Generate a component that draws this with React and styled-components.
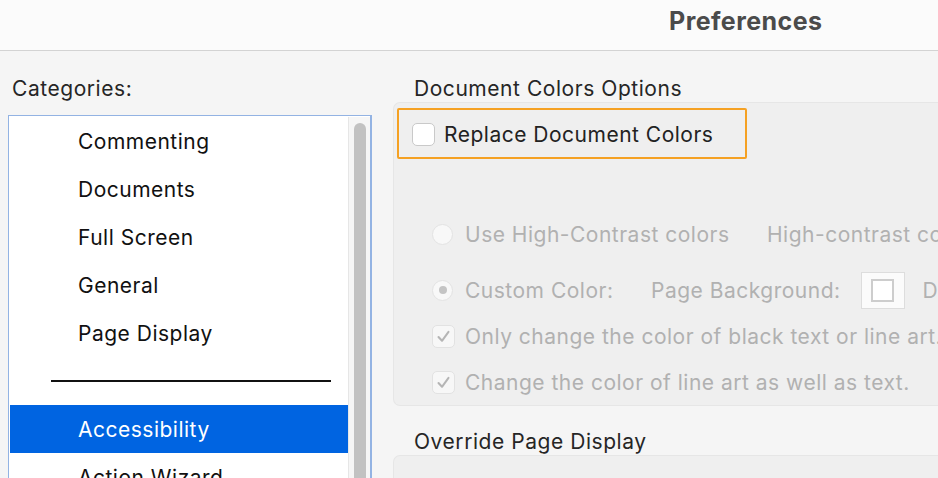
import React from "react";
import styled, { createGlobalStyle } from "styled-components";

const GlobalStyle = createGlobalStyle`
  html, body {
    margin: 0;
    padding: 0;
    background: #f5f5f5;
    font-family: Inter, "Noto Sans", "Liberation Sans", sans-serif;
    -webkit-font-smoothing: antialiased;
  }
`;

const Window = styled.div`
  width: 938px;
  height: 478px;
  overflow: hidden;
  background: #f5f5f5;
`;

const TitleBar = styled.div`
  height: 51px;
  box-sizing: border-box;
  display: flex;
  align-items: center;
  padding: 0 0 8px 669px;
  background: #fbfbfb;
  border-bottom: 1px solid #d3d3d3;
`;

const Title = styled.h1`
  margin: 0;
  font-size: 25px;
  font-weight: 700;
  color: #4b4b4b;
  letter-spacing: 0.45px;
`;

const Body = styled.div`
  display: flex;
  gap: 21px;
  padding-left: 8px;
`;

const Column = styled.div`
  display: flex;
  flex-direction: column;
  padding-top: 26px;
  width: ${(p) => (p.$width ? `${p.$width}px` : "auto")};
  flex: ${(p) => (p.$width ? "none" : "1")};
  min-width: 0;
`;

const Heading = styled.div`
  height: 24px;
  line-height: 24px;
  font-size: 21px;
  letter-spacing: 0.55px;
  color: #262626;
  padding-left: ${(p) => p.$indent || 0}px;
  margin-top: ${(p) => p.$top || 0}px;
  white-space: nowrap;
`;

const ListBox = styled.div`
  margin-top: 14px;
  height: 400px;
  display: flex;
  background: #ffffff;
  border: 1px solid #93b3e3;
  border-right-width: 2px;
  padding: 1px 0 0 1px;
`;

const Items = styled.div`
  flex: 1;
  display: flex;
  flex-direction: column;
`;

const Item = styled.div`
  height: 48px;
  flex: none;
  display: flex;
  align-items: center;
  padding-left: 68px;
  font-size: 21px;
  letter-spacing: 0.5px;
  color: ${(p) => (p.$selected ? "#ffffff" : "#111111")};
  background: ${(p) => (p.$selected ? "#0064e1" : "transparent")};
`;

const SeparatorRow = styled.div`
  height: 48px;
  flex: none;
  display: flex;
  align-items: center;
  padding-left: 41px;
`;

const Rule = styled.div`
  width: 280px;
  height: 2px;
  background: #111111;
`;

const ScrollTrack = styled.div`
  width: 21px;
  flex: none;
  background: #f6f6f6;
  border-left: 1px solid #e6e6e6;
  display: flex;
  justify-content: center;
  padding-top: 6px;
`;

const ScrollThumb = styled.div`
  width: 12px;
  height: 420px;
  border-radius: 6px;
  background: #c2c2c2;
`;

const Group = styled.div`
  margin-top: ${(p) => p.$top ?? 1}px;
  background: #efefef;
  border: 1px solid #e6e6e6;
  border-right: none;
  border-radius: 7px 0 0 7px;
  padding: 5px 0 0 3px;
  height: ${(p) => (p.$height ? `${p.$height}px` : "auto")};
  box-sizing: border-box;
`;

const Highlight = styled.div`
  width: 350px;
  height: 51px;
  box-sizing: border-box;
  border: 2px solid #f5a123;
  border-radius: 2px;
  display: flex;
  align-items: center;
  gap: 9px;
  padding: 2px 0 0 13px;
`;

const Box = styled.span`
  width: 23px;
  height: 23px;
  box-sizing: border-box;
  flex: none;
  border-radius: 5px;
  border: 1px solid ${(p) => (p.$disabled ? "#e2e2e2" : "#c9c9c9")};
  background: ${(p) => (p.$disabled ? "#f7f7f7" : "#ffffff")};
  display: flex;
  align-items: center;
  justify-content: center;
`;

const Label = styled.span`
  font-size: 21px;
  letter-spacing: 0.5px;
  color: ${(p) => (p.$disabled ? "#b1b1b1" : "#222222")};
  white-space: nowrap;
`;

const Options = styled.div`
  display: flex;
  flex-direction: column;
  padding: 52px 0 0 35px;
`;

const Row = styled.div`
  height: 46px;
  display: flex;
  align-items: center;
  margin-top: ${(p) => p.$top || 0}px;
  white-space: nowrap;
`;

const Cell = styled.div`
  display: flex;
  align-items: center;
  gap: ${(p) => p.$gap || 12}px;
  width: ${(p) => (p.$width ? `${p.$width}px` : "auto")};
  flex: none;
`;

const Radio = styled.span`
  width: 21px;
  height: 21px;
  box-sizing: border-box;
  border-radius: 50%;
  border: 1px solid #e3e3e3;
  background: #f8f8f8;
  display: flex;
  align-items: center;
  justify-content: center;
  flex: none;

  &::after {
    content: "";
    width: 8px;
    height: 8px;
    border-radius: 50%;
    background: ${(p) => (p.$checked ? "#c4c4c4" : "transparent")};
  }
`;

const Swatch = styled.span`
  width: 44px;
  height: 37px;
  box-sizing: border-box;
  margin: 0 18px 0 20px;
  background: #fbfbfb;
  border: 1px solid #dddddd;
  display: flex;
  align-items: center;
  justify-content: center;
  flex: none;
`;

const SwatchInner = styled.span`
  width: 23px;
  height: 23px;
  box-sizing: border-box;
  border: 2px solid #cdcdcd;
  background: #ffffff;
`;

function Check() {
  return (
    <svg width="15" height="15" viewBox="0 0 15 15">
      <path
        d="M2.5 8 L6 11.8 L12.5 2.8"
        fill="none"
        stroke="#b5b5b5"
        strokeWidth="2"
        strokeLinecap="round"
        strokeLinejoin="round"
      />
    </svg>
  );
}

const categories = ["Commenting", "Documents", "Full Screen", "General", "Page Display"];

export default function App() {
  return (
    <>
      <GlobalStyle />
      <Window>
        <TitleBar>
          <Title>Preferences</Title>
        </TitleBar>
        <Body>
          <Column $width={364}>
            <Heading $indent={4}>Categories:</Heading>
            <ListBox>
              <Items>
                {categories.map((c) => (
                  <Item key={c}>{c}</Item>
                ))}
                <SeparatorRow>
                  <Rule />
                </SeparatorRow>
                <Item $selected>Accessibility</Item>
                <Item>Action Wizard</Item>
              </Items>
              <ScrollTrack>
                <ScrollThumb />
              </ScrollTrack>
            </ListBox>
          </Column>
          <Column>
            <Heading $indent={21}>Document Colors Options</Heading>
            <Group $height={304}>
              <Highlight>
                <Box />
                <Label>Replace Document Colors</Label>
              </Highlight>
              <Options>
                <Row>
                  <Cell $width={335}>
                    <Radio />
                    <Label $disabled>Use High-Contrast colors</Label>
                  </Cell>
                  <Label $disabled>High-contrast color combination:</Label>
                </Row>
                <Row $top={10}>
                  <Cell $width={219}>
                    <Radio $checked />
                    <Label $disabled>Custom Color:</Label>
                  </Cell>
                  <Label $disabled>Page Background:</Label>
                  <Swatch>
                    <SwatchInner />
                  </Swatch>
                  <Label $disabled>Document Text:</Label>
                </Row>
                <Row>
                  <Cell $gap={10}>
                    <Box $disabled>
                      <Check />
                    </Box>
                    <Label $disabled>Only change the color of black text or line art.</Label>
                  </Cell>
                </Row>
                <Row>
                  <Cell $gap={10}>
                    <Box $disabled>
                      <Check />
                    </Box>
                    <Label $disabled>Change the color of line art as well as text.</Label>
                  </Cell>
                </Row>
              </Options>
            </Group>
            <Heading $indent={21} $top={24}>Override Page Display</Heading>
            <Group $top={1} $height={60} />
          </Column>
        </Body>
      </Window>
    </>
  );
}
